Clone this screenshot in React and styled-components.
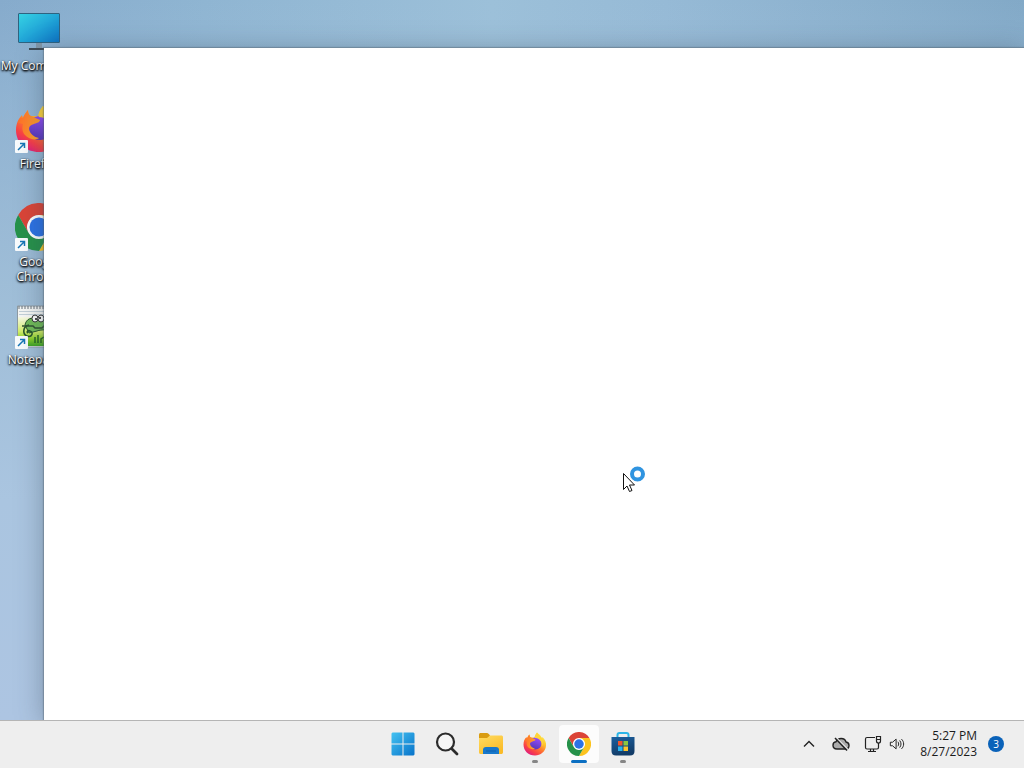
import React from "react";
import styled, { createGlobalStyle } from "styled-components";

const GlobalStyle = createGlobalStyle`
  * {
    box-sizing: border-box;
  }
  body {
    margin: 0;
    font-family: "Open Sans", "Noto Sans", sans-serif;
    font-size: 12px;
  }
  button {
    margin: 0;
    padding: 0;
    border: 0;
    background: transparent;
    font: inherit;
    color: inherit;
  }
  svg {
    display: block;
  }
`;

const Screen = styled.div`
  display: flex;
  flex-direction: column;
  height: 100vh;
  overflow: hidden;
`;

const Desktop = styled.main`
  position: relative;
  flex: 1;
  min-height: 0;
  overflow: hidden;
  background:
    linear-gradient(to bottom, transparent 0, rgba(160, 191, 218, 0.4) 100px, rgba(162, 192, 217, 0.9) 300px, #aac5e0 500px, #adc5e2 100%),
    linear-gradient(to right, #86abcc 0%, #8fb5d2 20%, #9cc0d9 48%, #96bad6 65%, #82a9c7 100%);
`;

const IconColumn = styled.div`
  display: flex;
  flex-direction: column;
  width: 78px;
  padding-top: 7px;
`;

const Shortcut = styled.button`
  position: relative;
  display: flex;
  flex-direction: column;
  align-items: center;
  gap: 3px;
  height: 98px;
`;

const ShortcutLabel = styled.span`
  width: 60px;
  display: flex;
  justify-content: center;
  line-height: 15px;
  color: #fff;
  text-align: center;
  white-space: ${props => (props.$wrap ? "normal" : "nowrap")};
  text-shadow: 0 1px 2px #000, 1px 1px 2px #000, 0 1px 3px rgba(0, 0, 0, 0.6);
`;

const ArrowBadge = styled.svg`
  position: absolute;
  left: 15px;
  top: 35px;
`;

const AppWindow = styled.section`
  position: absolute;
  top: 48px;
  left: 44px;
  right: 0;
  bottom: 0;
  background: #fff;
  box-shadow: 0 0 1px 1px rgba(80, 95, 105, 0.4), 0 4px 26px rgba(50, 65, 80, 0.4);
`;

const Pointer = styled.svg`
  position: absolute;
  left: 622px;
  top: 464px;
`;

const Taskbar = styled.footer`
  display: grid;
  grid-template-columns: 1fr auto 1fr;
  align-items: center;
  height: 48px;
  padding-bottom: 2px;
  border-top: 1px solid #b5b5b5;
  background: #eeeeee;
  color: #1b1b1b;
`;

const Apps = styled.nav`
  grid-column: 2;
  display: flex;
  gap: 4px;
  padding-left: 2px;
`;

const AppButton = styled.button`
  position: relative;
  display: flex;
  align-items: center;
  justify-content: center;
  width: 40px;
  height: 38px;
  border-radius: 4px;
  background: ${props => (props.$active ? "#fcfcfc" : "transparent")};

  &::after {
    content: "";
    position: absolute;
    bottom: 0;
    width: ${props => (props.$active ? "16px" : "6px")};
    height: 3px;
    border-radius: 2px;
    background: ${props => (props.$active ? "#0b6fc2" : "#868686")};
    display: ${props => (props.$running ? "block" : "none")};
  }
`;

const Tray = styled.div`
  display: flex;
  align-items: center;
  justify-content: flex-end;
  padding-right: 20px;
`;

const TrayButton = styled.button`
  display: flex;
  align-items: center;
  justify-content: center;
  width: ${props => (props.$narrow ? "16px" : "32px")};
  height: 38px;
`;

const Clock = styled.button`
  margin-left: 15px;
  line-height: 16px;
  text-align: right;
  white-space: nowrap;
`;

const Badge = styled.button`
  width: 16px;
  height: 16px;
  margin-left: 11px;
  border-radius: 50%;
  background: #0a62b9;
  color: #fff;
  font-size: 10px;
  line-height: 16px;
  text-align: center;
`;

function ComputerIcon() {
  return (
    <svg width="48" height="48" viewBox="0 0 48 48">
      <defs>
        <linearGradient id="screen" x1="0" y1="0" x2="1" y2="1">
          <stop offset="0" stopColor="#36d4e4" />
          <stop offset="0.5" stopColor="#22a7d8" />
          <stop offset="1" stopColor="#0b72c4" />
        </linearGradient>
      </defs>
      <rect x="21" y="36" width="6" height="5" fill="#8297a8" />
      <rect x="14" y="41" width="20" height="2" fill="#3f4b55" />
      <rect x="3.5" y="6.5" width="41" height="29" rx="0.5" fill="url(#screen)" stroke="#2f6380" />
    </svg>
  );
}

function FirefoxIcon({ size, id }) {
  return (
    <svg width={size} height={size} viewBox="0 0 48 48">
      <defs>
        <linearGradient id={id + "body"} x1="0.85" y1="0.1" x2="0.25" y2="0.95">
          <stop offset="0" stopColor="#fff04a" />
          <stop offset="0.3" stopColor="#ffc22e" />
          <stop offset="0.55" stopColor="#ff7a2f" />
          <stop offset="0.8" stopColor="#fa4045" />
          <stop offset="1" stopColor="#e01f7c" />
        </linearGradient>
        <linearGradient id={id + "globe"} x1="0.7" y1="0" x2="0.3" y2="1">
          <stop offset="0" stopColor="#9a4dff" />
          <stop offset="1" stopColor="#5136b5" />
        </linearGradient>
        <linearGradient id={id + "head"} x1="0" y1="0" x2="1" y2="0.3">
          <stop offset="0" stopColor="#ff6a28" />
          <stop offset="1" stopColor="#ffa02b" />
        </linearGradient>
      </defs>
      <path
        d="M28 1C32 4 35 7 37 11C38 11 39 12 39 10C44 15 47 21 46 28C45 39 35 47 24 47C11 47 1 38 1 25C1 18 4 13 7 10L8 13C9 10 11 7 13 5C13 8 14 10 15 11H23C24 7 26 4 28 1Z"
        fill={`url(#${id}body)`}
      />
      <circle cx="25" cy="23" r="12" fill={`url(#${id}globe)`} />
      <path
        d="M3 18C4 14 6 12 8 13C9 10 11 7 13 5C13 8 14 10 16 11L25 15C25 17 22 18 19 19C16 20 14 21 14 24C15 29 19 32 24 33C20 36 13 34 9 29C7 26 7 22 8 19C6 18 4 18 3 18Z"
        fill={`url(#${id}head)`}
      />
      <path d="M28 1C24 6 23 9 24 12C30 12 35 16 37 21C38 25 38 28 37 30C41 25 41 19 38 14C36 9 31 6 28 1Z" fill="#ffd43a" />
    </svg>
  );
}

function ChromeIcon({ size }) {
  return (
    <svg width={size} height={size} viewBox="0 0 48 48">
      <circle cx="24" cy="24" r="12.2" fill="#fff" />
      <path d="M24 12H44.8A24 24 0 0 0 3.2 12L13.6 30A12 12 0 0 1 24 12Z" fill="#db4437" />
      <path d="M34.4 30L24 48A24 24 0 0 0 44.8 12H24A12 12 0 0 1 34.4 30Z" fill="#fcc31e" />
      <path d="M13.6 30L3.2 12A24 24 0 0 0 24 48L34.4 30A12 12 0 0 1 13.6 30Z" fill="#26924a" />
      <circle cx="24" cy="24" r="9.5" fill="#2c72e6" />
    </svg>
  );
}

function NotepadIcon() {
  return (
    <svg width="48" height="48" viewBox="0 0 48 48">
      <defs>
        <linearGradient id="grass" x1="0" y1="0" x2="0" y2="1">
          <stop offset="0" stopColor="#f8fae6" />
          <stop offset="0.5" stopColor="#d3ee6a" />
          <stop offset="0.75" stopColor="#8bd02c" />
          <stop offset="1" stopColor="#3ca424" />
        </linearGradient>
      </defs>
      <path d="M2.5 5H38L45.5 13V46H2.5Z" fill="#f6f7f5" stroke="#8e9ba3" />
      <path d="M4 10.500H38M4 13.500H40" stroke="#c3d0d8" />
      <path d="M4 5V8M7 5V8M10 5V8M13 5V8M16 5V8M19 5V8M22 5V8M25 5V8M28 5V8M31 5V8M34 5V8" stroke="#667078" />
      <rect x="3" y="16" width="42" height="29" fill="url(#grass)" />
      <path d="M10 24C11 18 17 15 22 19C28 17 34 21 37 26C33 30 27 28 22 30L14 32Z" fill="#70bb58" stroke="#28572c" />
      <path d="M14 24C8 25 7 33 12 35C17 37 19 31 15 30C13 29 11 31 13 32" fill="none" stroke="#28572c" strokeWidth="1.6" />
      <path d="M7 25H18L20 27H27L29 25H34" fill="none" stroke="#315431" strokeWidth="1.6" />
      <ellipse cx="20" cy="17.500" rx="3" ry="3.500" fill="#fff" stroke="#333" />
      <ellipse cx="26" cy="17.500" rx="3" ry="3.500" fill="#fff" stroke="#333" />
      <circle cx="21" cy="18" r="1" fill="#111" />
      <circle cx="25" cy="17" r="1" fill="#111" />
      <path d="M20 42V36M23 42V34M26 42V38L29 36" stroke="#246923" fill="none" strokeWidth="1.5" />
    </svg>
  );
}

function ShortcutArrow() {
  return (
    <ArrowBadge width="13" height="13" viewBox="0 0 13 13">
      <rect width="13" height="13" rx="1" fill="#f8fbfd" />
      <path d="M3 10L9 4M5 3.500H9.500V8" fill="none" stroke="#1676b6" strokeWidth="1.5" />
    </ArrowBadge>
  );
}

function StartIcon() {
  return (
    <svg width="24" height="24" viewBox="0 0 24 24">
      <defs>
        <linearGradient id="start" gradientUnits="userSpaceOnUse" x1="0" y1="0" x2="24" y2="24">
          <stop offset="0" stopColor="#45c4f2" />
          <stop offset="1" stopColor="#0671c9" />
        </linearGradient>
      </defs>
      <path
        d="M1.500 0.500H11.500V11.500H0.500V1.500ZM12.500 0.500H22.500L23.500 1.500V11.500H12.500ZM0.500 12.500H11.500V23.500H1.500L0.500 22.500ZM12.500 12.500H23.500V22.500L22.500 23.500H12.500Z"
        fill="url(#start)"
      />
    </svg>
  );
}

function SearchIcon() {
  return (
    <svg width="24" height="24" viewBox="0 0 24 24" fill="none" strokeLinecap="round">
      <circle cx="10.500" cy="10" r="8.500" fill="#f6f6f6" stroke="#2b2b2b" strokeWidth="2.2" />
      <path d="M17 17L22 22" stroke="#2b2b2b" strokeWidth="2.800" />
    </svg>
  );
}

function FolderIcon() {
  return (
    <svg width="26" height="24" viewBox="0 0 26 24">
      <defs>
        <linearGradient id="folder" x1="0" y1="0" x2="0.6" y2="1">
          <stop offset="0" stopColor="#ffdc62" />
          <stop offset="1" stopColor="#fabb28" />
        </linearGradient>
      </defs>
      <path d="M1 3C1 1.500 1.500 1 3 1H9C10 1 11 2 12 3.500L10 8H1Z" fill="#d99c12" />
      <path d="M1 6H9L12 3.500H23C24.500 3.500 25 4 25 5.500V20C25 21.500 24.500 22 23 22H3C1.500 22 1 21.500 1 20Z" fill="url(#folder)" />
      <path d="M5 22V18C5 16 6 15 8 15H18C20 15 21 16 21 18V22Z" fill="#1878cb" />
      <path d="M8 19H18" stroke="#1269b8" strokeWidth="1.500" />
    </svg>
  );
}

function StoreIcon() {
  return (
    <svg width="24" height="26" viewBox="0 0 24 26">
      <defs>
        <linearGradient id="store" x1="0" y1="0" x2="0.3" y2="1">
          <stop offset="0" stopColor="#1b5f9f" />
          <stop offset="1" stopColor="#123c68" />
        </linearGradient>
      </defs>
      <path d="M6.500 7V4C6.500 2.500 7 2 8.500 2H15.500C17 2 17.500 2.500 17.500 4V7" fill="none" stroke="#2bb5e8" strokeWidth="2" />
      <path d="M0.500 6H23.500V20C23.500 23 22 24.500 19 24.500H5C2 24.500 0.500 23 0.500 20Z" fill="url(#store)" />
      <rect x="7" y="10" width="4.500" height="4.500" fill="#f2552c" />
      <rect x="12.500" y="10" width="4.500" height="4.500" fill="#8cc63f" />
      <rect x="7" y="15.500" width="4.500" height="4.500" fill="#29b2ee" />
      <rect x="12.500" y="15.500" width="4.500" height="4.500" fill="#ffc52b" />
    </svg>
  );
}

function ChevronIcon() {
  return (
    <svg width="12" height="12" viewBox="0 0 12 12" fill="none" stroke="#222" strokeWidth="1.400">
      <path d="M1 8.500L6 3.500L11 8.500" />
    </svg>
  );
}

function CloudOffIcon() {
  return (
    <svg width="18" height="16" viewBox="0 0 18 16" fill="none" stroke="#222">
      <path
        d="M5 13C2.500 13 1 11.500 1 9.300C1 7.300 2.300 6 4 5.800C5 3.500 7 2.500 9.200 2.500C11.700 2.500 13.500 4 14 6C16 6.300 17 7.800 17 9.500C17 11.500 15.500 13 13.500 13Z"
        fill="#ababab"
        strokeWidth="1.400"
      />
      <path d="M4 1.500L16 13.500" stroke="#eee" strokeWidth="1.200" />
      <path d="M3 2L15 14.500" strokeWidth="1.500" />
    </svg>
  );
}

function NetworkIcon() {
  return (
    <svg width="18" height="18" viewBox="0 0 18 18" fill="none" stroke="#222" strokeWidth="1.200">
      <path d="M11 2.500H3C2 2.500 1.500 3 1.500 4V12.500C1.500 13.500 2 14 3 14H13C14 14 14.500 13.500 14.500 12.500V8" />
      <path d="M4 16.500H12M6.500 14V16.500M9.500 14V16.500" />
      <path d="M12.500 1.500H16.500V6C16.500 7.200 15.500 8 14.500 8C13.500 8 12.500 7.200 12.500 6ZM12.500 4.500H16.500" />
    </svg>
  );
}

function SpeakerIcon() {
  return (
    <svg width="18" height="16" viewBox="0 0 18 16" fill="none" stroke="#222" strokeWidth="1.100" strokeLinejoin="round">
      <path d="M1.500 6H4L8 2.500V13.500L4 10H1.500Z" />
      <path d="M10 5.500C11.200 7 11.200 9 10 10.500M12 4C14 6.500 14 9.500 12 12M14 2.500C17.300 5.500 17.300 10.500 14 13.500" />
    </svg>
  );
}

const shortcuts = [
  { name: "My Computer", icon: <ComputerIcon /> },
  { name: "Firefox", icon: <FirefoxIcon size={48} id="desktop-" />, arrow: true },
  { name: "Google Chrome", icon: <ChromeIcon size={48} />, arrow: true, wrap: true },
  { name: "Notepad++", icon: <NotepadIcon />, arrow: true }
];

const apps = [
  { name: "Start", icon: <StartIcon /> },
  { name: "Search", icon: <SearchIcon /> },
  { name: "File Explorer", icon: <FolderIcon /> },
  { name: "Firefox", icon: <FirefoxIcon size={24} id="task-" />, running: true },
  { name: "Google Chrome", icon: <ChromeIcon size={24} />, running: true, active: true },
  { name: "Microsoft Store", icon: <StoreIcon />, running: true }
];

export default function App() {
  return (
    <Screen>
      <GlobalStyle />
      <Desktop>
        <IconColumn>
          {shortcuts.map(item => (
            <Shortcut key={item.name} type="button">
              {item.icon}
              {item.arrow && <ShortcutArrow />}
              <ShortcutLabel $wrap={item.wrap}>{item.name}</ShortcutLabel>
            </Shortcut>
          ))}
        </IconColumn>
        <AppWindow aria-label="Application window" />
        {/* busy pointer */}
        <Pointer width="26" height="32" viewBox="0 0 26 32">
          <circle cx="15.500" cy="10" r="5.500" fill="#fff" stroke="#3094e0" strokeWidth="4" />
          <path d="M1.500 9.500V25.500L5 22L7.500 27.500L10 26.500L7.500 21H12.500Z" fill="#fff" stroke="#111" />
        </Pointer>
      </Desktop>
      <Taskbar>
        <Apps>
          {apps.map(app => (
            <AppButton key={app.name} type="button" aria-label={app.name} $running={app.running} $active={app.active}>
              {app.icon}
            </AppButton>
          ))}
        </Apps>
        <Tray>
          <TrayButton type="button" aria-label="Show hidden icons"><ChevronIcon /></TrayButton>
          <TrayButton type="button" aria-label="OneDrive"><CloudOffIcon /></TrayButton>
          <TrayButton type="button" aria-label="Network"><NetworkIcon /></TrayButton>
          <TrayButton type="button" aria-label="Volume" $narrow><SpeakerIcon /></TrayButton>
          <Clock type="button">
            5:27 PM<br />8/27/2023
          </Clock>
          <Badge type="button" aria-label="3 notifications">3</Badge>
        </Tray>
      </Taskbar>
    </Screen>
  );
}
